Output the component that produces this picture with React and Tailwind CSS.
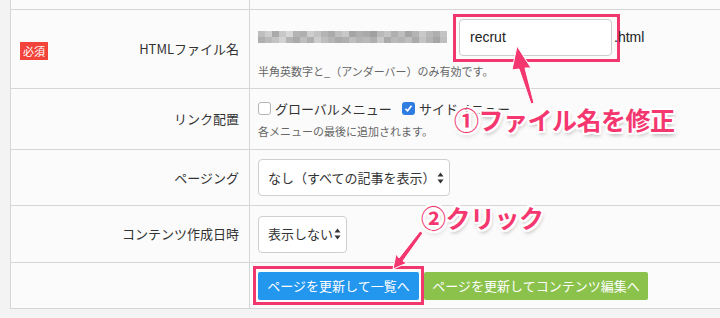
const jp = { fontFamily: '"Noto Sans CJK JP", "Noto Sans", sans-serif' };

// pixelated mosaic standing in for the blurred URL
const mosaic = [
    [190, 205, 170, 200, 215, 180, 175, 205, 195, 180, 170, 190, 200, 165, 175, 170, 160, 185, 195, 175, 190, 165, 180, 200, 185, 175, 195],
    [175, 185, 195, 210, 180, 170, 190, 175, 205, 190, 180, 170, 175, 190, 180, 185, 175, 200, 170, 185, 180, 190, 170, 195, 180, 165, 190],
];

function Row({ h, label, badge, children }) {
    return (
        <div className={`flex border-b border-[#d6d6d6] ${h}`}>
            <div className="flex w-[239px] shrink-0 items-center justify-between border-r border-[#d6d6d6] pl-[9px] pr-[10px]">
                <span>
                    {badge && (
                        <span className="inline-block bg-[#f2443a] px-[3px] text-[11px] leading-[18px] text-white">
                            必須
                        </span>
                    )}
                </span>
                <span className="text-[13px] text-[#333]">{label}</span>
            </div>
            <div className="flex flex-1 flex-col justify-center pl-[8px]">{children}</div>
        </div>
    );
}

function SelectBox({ w, text }) {
    return (
        <div className={`flex h-[37px] ${w} items-center justify-between rounded-[4px] border border-[#cfcfcf] bg-white pl-[9px] pr-[5px] text-[13px] text-[#333]`}>
            <span>{text}</span>
            <svg width="7" height="12" viewBox="0 0 7 12">
                <path d="M3.5 0.5 L6.5 4.5 H0.5 Z M3.5 11.5 L6.5 7.5 H0.5 Z" fill="#333" />
            </svg>
        </div>
    );
}

function CheckBox({ checked }) {
    return checked ? (
        <span className="inline-flex h-[13px] w-[13px] items-center justify-center rounded-[3px] bg-[#2f7de1]">
            <svg width="9" height="9" viewBox="0 0 9 9">
                <path d="M1.5 4.8 L3.6 6.8 L7.5 1.8" stroke="white" strokeWidth="1.6" fill="none" />
            </svg>
        </span>
    ) : (
        <span className="inline-block h-[13px] w-[13px] rounded-[3px] border border-[#b5b5b5] bg-white" />
    );
}

const outline = "[text-shadow:2px_0_0_#fff,-2px_0_0_#fff,0_2px_0_#fff,0_-2px_0_#fff,2px_2px_0_#fff,-2px_-2px_0_#fff,2px_-2px_0_#fff,-2px_2px_0_#fff,1px_3px_4px_rgba(0,0,0,0.35)]";

export default function App() {
    return (
        <div className="relative h-[318px] w-[720px] overflow-hidden bg-[#f3f3f3]" style={jp}>
            <div className="ml-[10px] w-[720px] border-l border-[#d6d6d6] bg-[#fbfbfb]">
                <div className="flex h-[10px] border-b border-[#d6d6d6]">
                    <div className="w-[239px] border-r border-[#d6d6d6]" />
                </div>
                <Row h="h-[79px]" label="HTMLファイル名" badge>
                    <div className="flex items-center">
                        <div className="flex w-[193px] flex-col blur-[0.6px]">
                            {mosaic.map((line, i) => (
                                <div key={i} className="flex">
                                    {line.map((g, j) => (
                                        <span key={j} className="h-[6px] w-[7px]" style={{ background: `rgb(${g},${g},${g})` }} />
                                    ))}
                                </div>
                            ))}
                        </div>
                        <div className="ml-[8px] flex h-[37px] w-[153px] items-center rounded-[4px] border border-[#cccccc] bg-white pl-[10px] text-[14px] text-[#222]" style={{ fontFamily: '"Liberation Sans", sans-serif' }}>
                            recrut
                        </div>
                        <span className="relative z-10 ml-[2px] text-[14px] text-[#222]" style={{ fontFamily: '"Liberation Sans", sans-serif' }}>
                            .html
                        </span>
                    </div>
                    <p className="mt-[7px] text-[11px] text-[#666]">半角英数字と_（アンダーバー）のみ有効です。</p>
                </Row>
                <Row h="h-[61px]" label="リンク配置">
                    <div className="flex items-center gap-[4px] text-[13px] text-[#333]">
                        <CheckBox />
                        <span>グローバルメニュー</span>
                        <span className="ml-[2px]" />
                        <CheckBox checked />
                        <span>サイドメニュー</span>
                    </div>
                    <p className="mt-[5px] text-[11px] text-[#666]">各メニューの最後に追加されます。</p>
                </Row>
                <Row h="h-[56px]" label="ページング">
                    <SelectBox w="w-[192px]" text="なし（すべての記事を表示）" />
                </Row>
                <Row h="h-[57px]" label="コンテンツ作成日時">
                    <SelectBox w="w-[89px]" text="表示しない" />
                </Row>
                <Row h="h-[46px]" label="">
                    <div className="flex items-center gap-[5px] text-[13px] text-white">
                        <button className="h-[28px] w-[161px] rounded-[2px] bg-[#2396ee]">ページを更新して一覧へ</button>
                        <button className="h-[28px] w-[224px] rounded-[2px] bg-[#8bc24c]">ページを更新してコンテンツ編集へ</button>
                    </div>
                </Row>
            </div>

            {/* highlight frames */}
            <div className="absolute left-[453px] top-[14px] h-[48px] w-[167px] border-[3px] border-[#f0386f]" />
            <div className="absolute left-[253px] top-[266px] h-[39px] w-[171px] border-[3px] border-[#f0386f]" />

            {/* arrows */}
            <svg className="absolute left-0 top-0" width="720" height="318" viewBox="0 0 720 318">
                <g fill="#f4386f" stroke="#fff" strokeWidth="1" strokeLinejoin="round">
                    <path d="M517 46 L531 68 L525 68 L534 103 L531 104 L519 69 L512 70 Z" />
                    <path d="M393 269 L396 254 L399 258 L420 231 L423 233 L403 261 L407 263 Z" />
                </g>
            </svg>

            {/* annotations */}
            <div className={`absolute left-[454px] top-[103px] text-[25px] font-bold leading-[32px] tracking-[-0.5px] text-[#f4386f] ${outline}`}>
                ①ファイル名を修正
            </div>
            <div className={`absolute left-[421px] top-[202px] text-[25px] font-bold leading-[30px] tracking-[-0.5px] text-[#f4386f] ${outline}`}>
                ②クリック
            </div>
        </div>
    );
}
